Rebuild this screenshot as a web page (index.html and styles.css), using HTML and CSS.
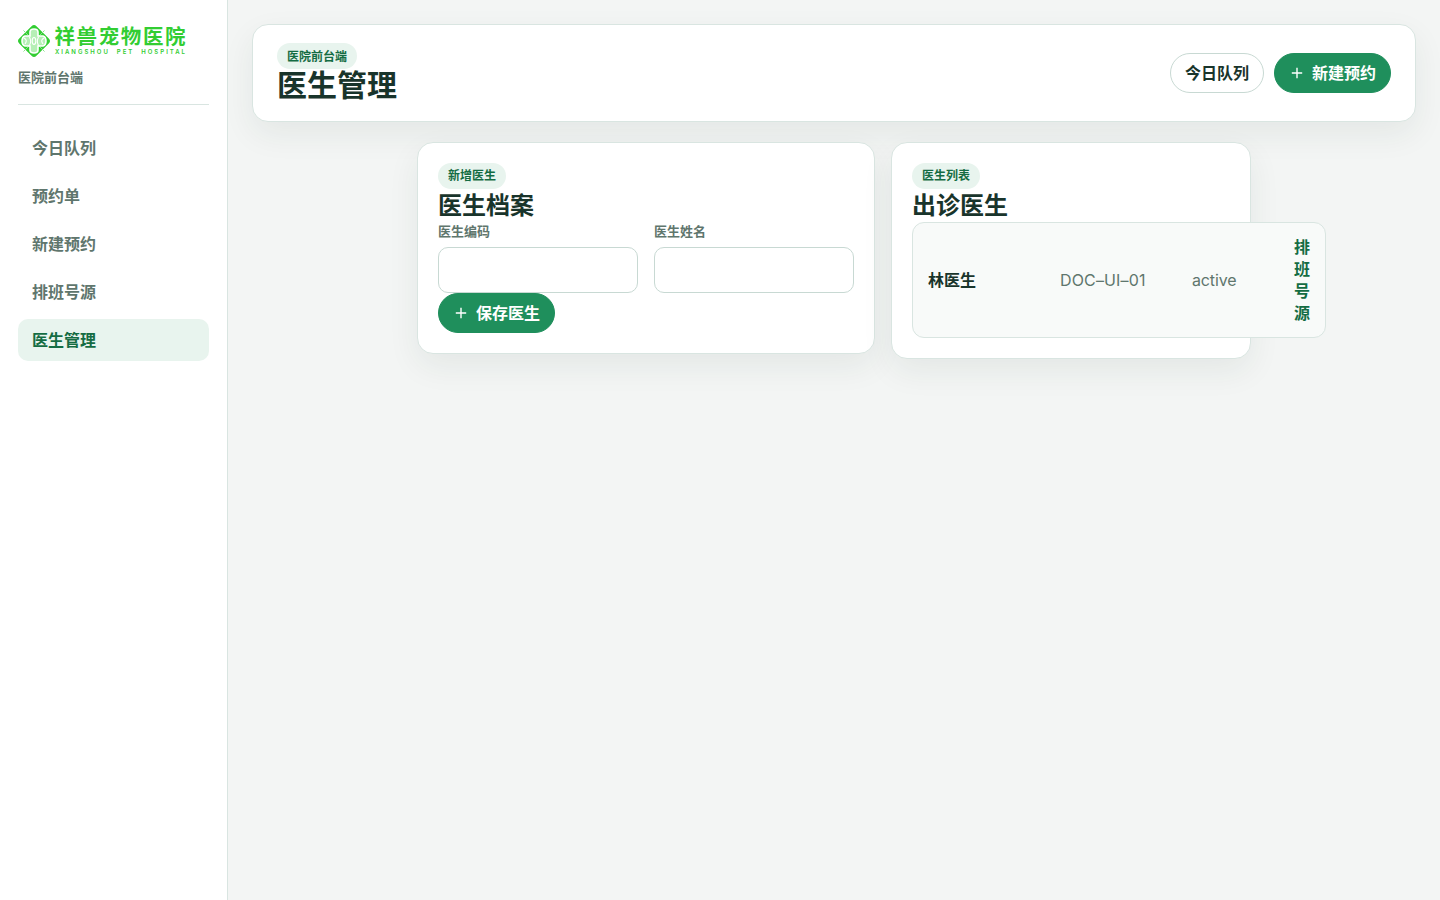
FILE: index.html
```
<!DOCTYPE html>
<html lang="zh-CN">
<head>
    <meta charset="UTF-8">
    <meta name="viewport" content="width=device-width, initial-scale=1.0">
    <title>医生管理</title>
    <link rel="stylesheet" href="styles.css">
</head>
<body>

<div class="shell">
    <aside class="sidebar">
        <div class="brand">
            <svg class="brand-logo" width="168" height="34" viewBox="0 0 168 34">
                <g transform="translate(16 17)">
                    <rect class="logo-diamond" x="-12.2" y="-12.2" width="24.4" height="24.4" rx="3.5" transform="rotate(45)"/>
                    <path class="logo-line" d="M-10.5 -10.5L-5 -5M10.5 -10.5L5 -5M-10.5 10.5L-5 5M10.5 10.5L5 5"/>
                    <path class="logo-cross" d="M-4 -5V-9Q-4 -12 0 -12T4 -9V-5H9Q12 -4 12 0T9 5H4V9Q4 12 0 12T-4 9V5H-9Q-12 4 -12 0T-9 -5Z"/>
                    <path class="logo-detail" d="M-10 -3Q-6 -1 -9 3M10 -3Q6 -1 9 3M-4.5 -4Q-2 1 -5 5M4.5 -4Q2 1 5 5"/>
                    <ellipse class="logo-detail" rx="1.8" ry="3.5"/>
                </g>
                <text class="logo-name" x="36.5" y="20" textLength="131">祥兽宠物医院</text>
                <text class="logo-sub" x="37" y="30" textLength="130" xml:space="preserve">XIANGSHOU  PET  HOSPITAL</text>
            </svg>
            <div class="brand-sub">医院前台端</div>
        </div>
        <nav class="nav">
            <a class="nav-item">今日队列</a>
            <a class="nav-item">预约单</a>
            <a class="nav-item">新建预约</a>
            <a class="nav-item">排班号源</a>
            <a class="nav-item active">医生管理</a>
        </nav>
    </aside>

    <main class="main">
        <header class="topbar">
            <div>
                <span class="badge">医院前台端</span>
                <h1>医生管理</h1>
            </div>
            <div class="actions">
                <button class="btn">今日队列</button>
                <button class="btn btn-primary">
                    <svg class="plus" width="12" height="12" viewBox="0 0 12 12"><path d="M6 .8V11.2M.8 6H11.2"/></svg>
                    新建预约
                </button>
            </div>
        </header>

        <div class="content">
            <section class="card form-card">
                <span class="badge">新增医生</span>
                <h2>医生档案</h2>
                <form>
                    <div class="form-grid">
                        <label>医生编码<input type="text"></label>
                        <label>医生姓名<input type="text"></label>
                    </div>
                    <button type="button" class="btn btn-primary">
                        <svg class="plus" width="12" height="12" viewBox="0 0 12 12"><path d="M6 .8V11.2M.8 6H11.2"/></svg>
                        保存医生
                    </button>
                </form>
            </section>

            <section class="card list-card">
                <span class="badge">医生列表</span>
                <h2>出诊医生</h2>
                <div class="doctor-row">
                    <strong>林医生</strong>
                    <span class="code">DOC–UI–01</span>
                    <span class="status">active</span>
                    <a>排班号源</a>
                </div>
            </section>
        </div>
    </main>
</div>

</body>
</html>
```
FILE: styles.css
```
* {
    box-sizing: border-box;
}
body {
    margin: 0;
    font-family: Inter, "Noto Sans CJK SC", sans-serif;
    font-size: 16px;
    line-height: 22px;
    color: #19342b;
    background: #f3f5f4;
}
.shell {
    display: grid;
    grid-template-columns: 228px 1fr;
    min-height: 100vh;
}
.sidebar {
    padding: 24px 18px;
    background: #fff;
    border-right: 1px solid #d9e5e1;
}
.brand {
    height: 81px;
    border-bottom: 1px solid #d9e5e1;
}
.brand-logo {
    display: block;
}
.logo-diamond {
    fill: #32cd32;
}
.logo-cross {
    fill: #b5efb5;
    stroke: #fff;
    stroke-width: 1.6;
}
.logo-line {
    stroke: #8be38b;
    stroke-width: 1;
}
.logo-detail {
    fill: none;
    stroke: #fff;
    stroke-width: 1.1;
}
.logo-name {
    font-size: 20.5px;
    font-weight: 700;
    fill: #32cd32;
}
.logo-sub {
    font-size: 6px;
    font-weight: 600;
    fill: #32cd32;
}
.brand-sub {
    margin-top: 8px;
    font-size: 13px;
    font-weight: 600;
    color: #5f766d;
}
.nav {
    display: grid;
    gap: 6px;
    margin-top: 22px;
}
.nav-item {
    padding: 10px 14px;
    border-radius: 10px;
    font-weight: 600;
    color: #5f766d;
}
.nav-item.active {
    color: #146c43;
    background: #e8f4ee;
}
.main {
    padding: 24px;
    min-width: 0;
}
.topbar {
    display: flex;
    align-items: center;
    justify-content: space-between;
    height: 98px;
    padding: 18px 24px;
    background: #fff;
    border: 1px solid #d9e5e1;
    border-radius: 16px;
    box-shadow: 0 12px 32px rgba(25, 52, 43, 0.07);
}
.badge {
    display: block;
    width: fit-content;
    padding: 2px 10px;
    border-radius: 999px;
    font-size: 12px;
    font-weight: 600;
    color: #146c43;
    background: #e8f4ee;
}
.topbar .badge {
    padding: 3px 10px 1px;
}
h1 {
    margin: 0;
    padding-bottom: 2px;
    font-size: 30px;
    line-height: 32px;
}
h2 {
    margin: 0;
    font-size: 24px;
    line-height: 33px;
}
.actions {
    display: flex;
    gap: 10px;
}
.btn {
    display: inline-flex;
    align-items: center;
    gap: 9px;
    height: 40px;
    padding: 0 14px;
    border: 1px solid #c8d9d3;
    border-radius: 999px;
    font: inherit;
    font-weight: 600;
    color: #19342b;
    background: #fff;
}
.btn-primary {
    padding: 0 14px 0 16px;
    color: #fff;
    border-color: #1f8f5c;
    background: #1f8f5c;
}
.plus {
    fill: none;
    stroke: #fff;
    stroke-width: 1.4;
}
.content {
    display: grid;
    grid-template-columns: 458px 360px;
    justify-content: center;
    align-items: start;
    gap: 16px;
    margin-top: 20px;
}
.card {
    padding: 20px;
    background: #fff;
    border: 1px solid #d9e5e1;
    border-radius: 16px;
    box-shadow: 0 12px 32px rgba(25, 52, 43, 0.07);
}
.form-grid {
    display: grid;
    grid-template-columns: 1fr 1fr;
    gap: 16px;
}
label {
    display: grid;
    gap: 6px;
    font-size: 13px;
    line-height: 19px;
    font-weight: 600;
    color: #5f766d;
}
input {
    width: 100%;
    height: 46px;
    border: 1px solid #c8d9d3;
    border-radius: 10px;
    background: #fff;
}
form .btn {
    display: flex;
}
/* fixed columns, the row runs wider than its card */
.doctor-row {
    display: grid;
    grid-template-columns: 120px 120px 90px 16px;
    gap: 12px;
    align-items: center;
    width: 414px;
    padding: 13px 15px;
    border: 1px solid #d9e5e1;
    border-radius: 12px;
    background: #f8faf9;
}
.doctor-row strong {
    font-weight: 600;
}
.doctor-row span {
    color: #5f766d;
}
.doctor-row .code {
    letter-spacing: 0.15px;
}
.doctor-row .status {
    letter-spacing: -0.15px;
}
.doctor-row a {
    font-weight: 600;
    color: #146c43;
}
```
